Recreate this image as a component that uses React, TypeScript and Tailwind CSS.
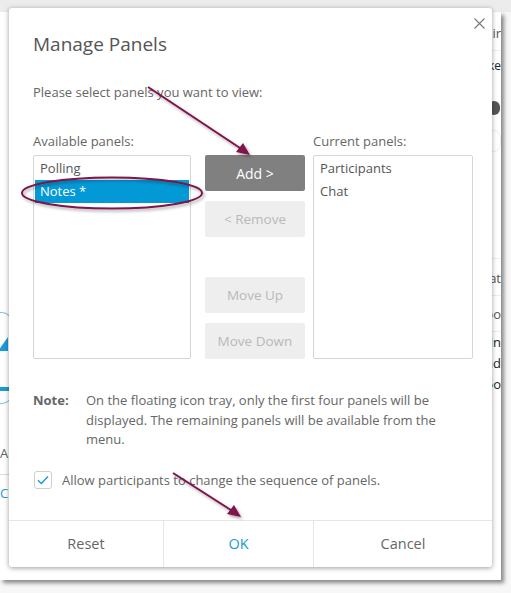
import React from "react";

const font = { fontFamily: '"Open Sans", "Noto Sans", sans-serif' };

function ListBox({ items, selected }: { items: string[]; selected?: number }) {
  return (
    <div className="w-full h-[204px] border border-[#d6d6d6] rounded-[2px] p-px bg-white">
      {items.map((it, i) => (
        <div
          key={it}
          className={
            "h-[23px] leading-[23px] pl-[5px] text-[13px] " +
            (i === selected ? "bg-[#0399d6] text-white" : "text-[#555]")
          }
        >
          {it}
        </div>
      ))}
    </div>
  );
}

function Btn({ label, active }: { label: string; active?: boolean }) {
  return (
    <div
      className={
        "h-[36px] w-[100px] rounded-[2px] flex items-center justify-center text-[13.5px] " +
        (active ? "bg-[#808080] text-white text-[14px]" : "bg-[#eeeeee] text-[#b9b9b9]")
      }
    >
      {label}
    </div>
  );
}

export default function App() {
  return (
    <div className="relative w-[511px] h-[593px] bg-[#f7f7f7] overflow-hidden" style={font}>
      {/* top strip */}
      <div className="h-[12px] bg-[#ececec]" />
      {/* underlying window */}
      <div className="absolute left-0 top-[12px] w-[501px] h-[568px] bg-white shadow-[3px_3px_4px_rgba(0,0,0,0.45)] overflow-hidden flex justify-between">
        {/* left side bits */}
        <div className="w-[12px] pt-[300px] flex flex-col items-start">
          <div className="relative w-[12px] h-[92px] rounded-r-[10px] border border-l-0 border-[#7cc3e6]">
            <div className="absolute left-[-2px] top-[24px] w-0 h-0 border-l-[10px] border-l-transparent border-b-[14px] border-b-[#1a9ad6]" />
            <div className="absolute left-0 top-[74px] w-[10px] h-[4px] bg-[#1a9ad6]" />
          </div>
          <div className="mt-[40px] text-[13px] text-[#666] leading-[18px]">Ap</div>
          <div className="mt-[12px] w-[12px] h-px bg-[#ddd]" />
          <div className="mt-[9px] text-[13px] text-[#1a9ad6] leading-[18px]">C</div>
        </div>
        {/* right side bits */}
        <div className="w-[70px] flex flex-col items-end text-[13px]">
          <div className="mt-[12px] text-[#555] leading-[18px]">Chair</div>
          <div className="mt-[8px] w-full h-px bg-[#eee]" />
          <div className="mt-[6px] text-[12px] text-[#222] leading-[18px]">Make</div>
          <div className="mt-[26px] mr-[1px] w-[12px] h-[14px] rounded-full bg-[#555]" />
          <div className="mt-[15px] w-[26px] h-[22px] rounded-[8px] border border-[#eee]" />
          <div className="mt-[106px] w-full h-px bg-[#eee]" />
          <div className="mt-[10px] text-[#555] leading-[18px]">Chat</div>
          <div className="mt-[8px] w-full h-px bg-[#eee]" />
          <div className="mt-[9px] text-[#555] leading-[18px]">Poo</div>
          <div className="mt-[8px] w-full h-px bg-[#eee]" />
          <div className="text-[#222] leading-[21px] text-right">
            <div>Join</div>
            <div>and</div>
            <div>too</div>
          </div>
        </div>
      </div>

      {/* dialog */}
      <div className="absolute left-[9px] top-[8px] w-[483px] h-[559px] bg-white rounded-[3px] shadow-[0_1px_5px_rgba(0,0,0,0.4)] flex flex-col">
        <div className="relative flex-1 pl-[24px] pr-[19px]">
          <svg className="absolute right-[7px] top-[10px]" width="11" height="11" viewBox="0 0 11 11">
            <path d="M0.5 0.5 L10.5 10.5 M10.5 0.5 L0.5 10.5" stroke="#777" strokeWidth="1.1" />
          </svg>
          <div className="pt-[22px] text-[19px] leading-[28px] text-[#555]">Manage Panels</div>
          <div className="mt-[25px] text-[13px] leading-[18px] text-[#666]">Please select panels you want to view:</div>
          <div className="mt-[31px] flex">
            <div className="w-[158px]">
              <div className="text-[13px] leading-[18px] text-[#666] mb-[5px]">Available panels:</div>
              <ListBox items={["Polling", "Notes *"]} selected={1} />
            </div>
            <div className="ml-[14px] pt-[23px] flex flex-col gap-[10px]">
              <Btn label="Add >" active />
              <Btn label="< Remove" />
              <div className="h-[20px]" />
              <Btn label="Move Up" />
              <Btn label="Move Down" />
            </div>
            <div className="ml-[8px] w-[160px]">
              <div className="text-[13px] leading-[18px] text-[#666] mb-[5px]">Current panels:</div>
              <ListBox items={["Participants", "Chat"]} />
            </div>
          </div>
          <div className="mt-[32px] flex text-[13px] leading-[19.5px] text-[#666]">
            <div className="w-[53px] font-bold">Note:</div>
            <div className="w-[365px]">
              On the floating icon tray, only the first four panels will be displayed. The remaining panels will be
              available from the menu.
            </div>
          </div>
          <div className="mt-[21px] flex items-center">
            <div className="ml-px w-[18px] h-[18px] rounded-[3px] border border-[#cfcfcf] flex items-center justify-center">
              <svg width="12" height="10" viewBox="0 0 12 10">
                <path d="M1 5.2 L4.3 8.4 L11 1.4" fill="none" stroke="#1a9ad6" strokeWidth="1.4" />
              </svg>
            </div>
            <div className="ml-[10px] text-[13px] text-[#666]">Allow participants to change the sequence of panels.</div>
          </div>
        </div>
        <div className="h-[47px] border-t border-[#e6e6e6] flex text-[14.5px]">
          <div className="w-[155px] flex items-center justify-center text-[#666] border-r border-[#e6e6e6]">Reset</div>
          <div className="w-[150px] flex items-center justify-center text-[#1a9ad6] border-r border-[#e6e6e6]">OK</div>
          <div className="flex-1 flex items-center justify-center text-[#666]">Cancel</div>
        </div>
      </div>

      {/* annotations */}
      <svg className="absolute left-0 top-0 pointer-events-none" width="511" height="593" viewBox="0 0 511 593">
        <defs>
          <filter id="sh" x="-20%" y="-20%" width="140%" height="140%">
            <feDropShadow dx="1.5" dy="2" stdDeviation="1.5" floodColor="#000" floodOpacity="0.35" />
          </filter>
        </defs>
        <g filter="url(#sh)" stroke="#7d1248" fill="#7d1248">
          <line x1="148" y1="87" x2="243" y2="150" strokeWidth="2" />
          <polygon points="250,155 236,152 243,143" stroke="none" />
          <line x1="173" y1="473" x2="234" y2="512" strokeWidth="2" />
          <polygon points="241,517 227,514 234,505" stroke="none" />
          <ellipse cx="112" cy="193" rx="90" ry="15.5" fill="none" strokeWidth="2" />
        </g>
      </svg>
    </div>
  );
}
